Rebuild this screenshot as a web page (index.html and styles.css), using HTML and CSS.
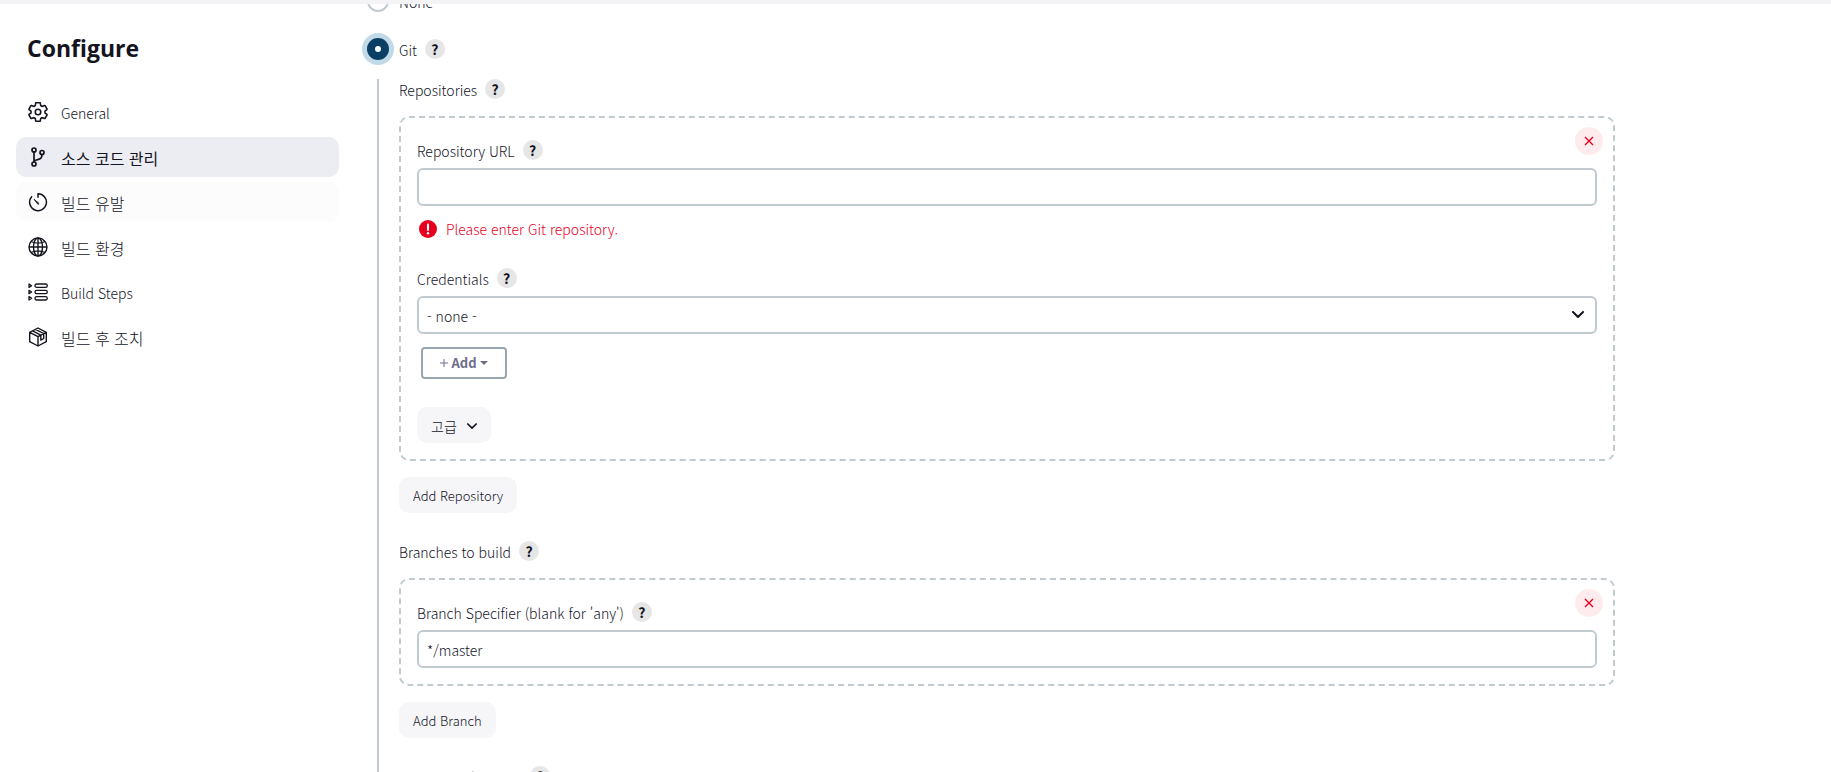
FILE: index.html
```html
<!DOCTYPE html>
<html lang="ko">
<head>
  <meta charset="utf-8">
  <meta name="viewport" content="width=device-width, initial-scale=1.0">
  <title>Configure</title>
  <link rel="stylesheet" href="styles.css">
</head>
<body>

  <header class="topbar"></header>

  <div class="page">
    <aside class="sidebar">
      <h1>Configure</h1>
      <nav class="tasks">
        <a class="task" href="#general">
          <svg viewBox="26 26 460 460" fill="none" stroke="currentColor" stroke-width="36" stroke-linejoin="round" stroke-linecap="round"><circle cx="256" cy="256" r="64"/><path d="M416.390 256a154.340 154.340 0 01-1.530 20.790l45.210 35.460a10.810 10.810 0 012.450 13.750l-42.770 74a10.810 10.810 0 01-13.140 4.590l-44.900-18.080a16.110 16.110 0 00-15.170 1.750A164.480 164.480 0 01325 400.800a15.940 15.940 0 00-8.820 12.140l-6.730 47.890a11.080 11.080 0 01-10.680 9.170h-85.540a11.110 11.110 0 01-10.690-8.870l-6.720-47.820a16.070 16.070 0 00-9-12.220 155.300 155.300 0 01-21.460-12.570 16 16 0 00-15.110-1.710l-44.890 18.070a10.810 10.810 0 01-13.140-4.580l-42.770-74a10.800 10.800 0 012.450-13.750l38.210-30a16.050 16.050 0 006-14.080c-.36-4.170-.58-8.330-.58-12.500s.21-8.270.58-12.350a16 16 0 00-6.070-13.940l-38.190-30A10.810 10.810 0 0149.480 186l42.770-74a10.810 10.810 0 0113.140-4.590l44.900 18.080a16.110 16.110 0 0015.170-1.750A164.480 164.480 0 01187 111.200a15.940 15.940 0 008.820-12.140l6.730-47.890A11.080 11.080 0 01213.230 42h85.540a11.110 11.110 0 0110.690 8.870l6.720 47.820a16.070 16.070 0 009 12.220 155.300 155.300 0 0121.460 12.570 16 16 0 0015.110 1.710l44.890-18.070a10.810 10.810 0 0113.140 4.580l42.770 74a10.800 10.800 0 01-2.450 13.750l-38.210 30a16.050 16.050 0 00-6.050 14.080c.33 4.140.55 8.300.55 12.470z"/></svg>
          <span>General</span>
        </a>
        <a class="task ko active" href="#scm">
          <svg viewBox="0 0 20 20" fill="none" stroke="currentColor" stroke-width="1.7" stroke-linecap="round"><circle cx="6" cy="3" r="2"/><circle cx="6" cy="17" r="2"/><circle cx="14" cy="5.500" r="2"/><path d="M6 5v10M14 7.500c0 4-2 4.500-4.500 5.200C7.500 13.200 6 13.500 6 15"/></svg>
          <span>소스 코드 관리</span>
        </a>
        <a class="task ko hover" href="#triggers">
          <svg viewBox="0 0 20 20" fill="none" stroke="currentColor" stroke-width="1.5" stroke-linecap="round" stroke-linejoin="round"><path d="M10 5.200V1.800a8.400 8.400 0 1 1-6.400 3"/><path d="M10.800 11.300L6 7.200l3.700 4.900z" fill="currentColor" stroke-width=".8"/></svg>
          <span>빌드 유발</span>
        </a>
        <a class="task ko" href="#environment">
          <svg viewBox="0 0 20 20" fill="none" stroke="currentColor" stroke-width="1.4"><circle cx="10" cy="10" r="9"/><ellipse cx="10" cy="10" rx="4.500" ry="9"/><path d="M10 1v18M1 10h18M3 4.500c4 2.200 10 2.200 14 0M3 15.500c4-2.200 10-2.200 14 0"/></svg>
          <span>빌드 환경</span>
        </a>
        <a class="task" href="#steps">
          <svg viewBox="0 0 20 20" fill="none" stroke="currentColor" stroke-width="1.3" stroke-linejoin="round"><rect x="7" y="2" width="12.300" height="3.400" rx="1.700"/><rect x="7" y="8.300" width="12.300" height="3.400" rx="1.700"/><rect x="7" y="14.600" width="12.300" height="3.400" rx="1.700"/><path d="M1 2l2.600 1.700L1 5.400zM1 8.300L3.600 10 1 11.700zM1 14.600l2.600 1.700L1 18z"/></svg>
          <span>Build Steps</span>
        </a>
        <a class="task ko" href="#post">
          <svg viewBox="0 0 20 20" fill="none" stroke="currentColor" stroke-width="1.4" stroke-linejoin="round"><path d="M10 1l8.300 4.300v9.400L10 19l-8.300-4.300V5.300zM1.700 5.300L10 9.600l8.300-4.300M10 9.600V19M4.600 3.900l8.200 4.200v5l2.900-1.600v-5L7.400 2.300"/></svg>
          <span>빌드 후 조치</span>
        </a>
      </nav>
    </aside>

    <main class="main">
      <div class="radio-row">
        <input type="radio" name="scm" id="scmNone">
        <label for="scmNone">None</label>
      </div>
      <div class="radio-row">
        <input type="radio" name="scm" id="scmGit" checked>
        <label for="scmGit">Git</label>
        <button type="button" class="help" aria-label="Help for Git">?</button>
      </div>

      <form class="nested">
        <div class="label-row">
          <span>Repositories</span>
          <button type="button" class="help" aria-label="Help for Repositories">?</button>
        </div>
        <section class="chunk">
          <button type="button" class="delete" aria-label="Delete repository">
            <svg viewBox="0 0 10 10" stroke="currentColor" stroke-width="1.4"><path d="M1 1l8 8M9 1L1 9"/></svg>
          </button>
          <div class="label-row">
            <label for="repoUrl">Repository URL</label>
            <button type="button" class="help" aria-label="Help for Repository URL">?</button>
          </div>
          <input type="text" class="field" id="repoUrl">
          <p class="error">
            <svg viewBox="0 0 18 18"><circle cx="9" cy="9" r="9" fill="currentColor"/><path d="M9 4.500v5.500" stroke="#fff" stroke-width="2" stroke-linecap="round"/><circle cx="9" cy="13.200" r="1.200" fill="#fff"/></svg>
            Please enter Git repository.
          </p>
          <div class="label-row">
            <label for="credentials">Credentials</label>
            <button type="button" class="help" aria-label="Help for Credentials">?</button>
          </div>
          <div class="select">
            <select class="field" id="credentials">
              <option>- none -</option>
            </select>
            <svg viewBox="0 0 12 8" fill="none" stroke="currentColor" stroke-width="2" stroke-linecap="round" stroke-linejoin="round"><path d="M1 1l5 5 5-5"/></svg>
          </div>
          <button type="button" class="add-credentials">
            <svg class="plus" viewBox="0 0 8 8" stroke="currentColor"><path d="M4 0v8M0 4h8"/></svg>
            Add
            <svg class="caret" viewBox="0 0 8 4" fill="currentColor"><path d="M0 0h8L4 4z"/></svg>
          </button>
          <button type="button" class="button advanced">
            고급
            <svg viewBox="0 0 12 8" fill="none" stroke="currentColor" stroke-width="2" stroke-linecap="round" stroke-linejoin="round"><path d="M1 1l5 5 5-5"/></svg>
          </button>
        </section>
        <button type="button" class="button">Add Repository</button>

        <div class="label-row next">
          <span>Branches to build</span>
          <button type="button" class="help" aria-label="Help for Branches to build">?</button>
        </div>
        <section class="chunk">
          <button type="button" class="delete" aria-label="Delete branch">
            <svg viewBox="0 0 10 10" stroke="currentColor" stroke-width="1.4"><path d="M1 1l8 8M9 1L1 9"/></svg>
          </button>
          <div class="label-row">
            <label for="branch">Branch Specifier (blank for 'any')</label>
            <button type="button" class="help" aria-label="Help for Branch Specifier">?</button>
          </div>
          <input type="text" class="field" id="branch" value="*/master">
        </section>
        <button type="button" class="button">Add Branch</button>

        <div class="label-row next">
          <span>Repository browser</span>
          <button type="button" class="help" aria-label="Help for Repository browser">?</button>
        </div>
      </form>
    </main>
  </div>

</body>
</html>
```
FILE: styles.css
```css
* {
  box-sizing: border-box;
}
body {
  display: flex;
  flex-direction: column;
  height: 100vh;
  margin: 0;
  overflow: hidden;
  background-color: #fff;
  color: #14141f;
  font-family: "Noto Sans CJK KR", sans-serif;
  font-size: 14px;
  font-weight: 300;
  line-height: 20px;
}
button, input, select {
  margin: 0;
  color: inherit;
  font: inherit;
}
svg {
  flex-shrink: 0;
}
.topbar {
  flex-shrink: 0;
  height: 4px;
  background-color: #f4f4f7;
}
.page {
  display: flex;
  flex: 1;
  gap: 28px;
  min-height: 0;
  overflow: hidden;
}

/* Sidebar */
.sidebar {
  flex: 0 0 339px;
  padding: 28px 0 0 16px;
}
h1 {
  margin: 0 0 28px;
  padding-left: 11px;
  font-family: "Open Sans", sans-serif;
  font-size: 23px;
  font-weight: 700;
  line-height: 32px;
}
.tasks {
  display: flex;
  flex-direction: column;
  gap: 5px;
}
.task {
  display: flex;
  align-items: center;
  gap: 13px;
  height: 40px;
  padding: 0 12px;
  border-radius: 10px;
  color: inherit;
  text-decoration: none;
}
.task.ko {
  font-size: 16px;
}
.task svg {
  width: 20px;
  height: 20px;
}
.task span, .label-row span, label {
  padding-top: 2px;
}
.task.active {
  background-color: #ecedf3;
  font-weight: 400;
}
.task.hover {
  background-color: #fcfcfd;
}

/* Source code management */
.main {
  flex: 1;
  max-width: 1248px;
  margin-top: -27px;
}
.radio-row {
  display: flex;
  align-items: center;
  height: 48px;
}
.radio-row input {
  appearance: none;
  width: 22px;
  height: 22px;
  margin-right: 10px;
  border: 2px solid #c0cacf;
  border-radius: 50%;
  background-color: #fff;
}
.radio-row input:checked {
  border: 8px solid #0b3f63;
  box-shadow: 0 0 0 5px #c2d9e8;
}
.help {
  width: 20px;
  height: 20px;
  margin-left: 8px;
  padding: 0;
  border: none;
  border-radius: 50%;
  background-color: #e6e6e6;
  font-weight: 700;
}
.nested {
  display: flex;
  flex-direction: column;
  align-items: flex-start;
  height: 1000px;
  margin: 6px 0 0 10px;
  padding-left: 20px;
  border-left: 2px solid #c0cacf;
}
.label-row {
  display: flex;
  align-items: center;
  height: 20px;
}
.label-row.next {
  margin-top: 28px;
}
.chunk {
  position: relative;
  display: flex;
  flex-direction: column;
  align-items: flex-start;
  width: 100%;
  margin: 17px 0 16px;
  padding: 22px 16px 16px;
  border: 2px dashed #c0cacf;
  border-radius: 10px;
}
.delete {
  position: absolute;
  top: 9px;
  right: 10px;
  display: flex;
  align-items: center;
  justify-content: center;
  width: 28px;
  height: 28px;
  padding: 0;
  border: none;
  border-radius: 50%;
  background-color: #fdebed;
  color: #e6001f;
}
.delete svg {
  width: 10px;
  height: 10px;
}
.field {
  width: 100%;
  height: 38px;
  margin-top: 8px;
  padding: 2px 8px 0;
  border: 2px solid #c0cacf;
  border-radius: 6px;
  background-color: #fff;
}
.select {
  position: relative;
  width: 100%;
}
.select .field {
  display: block;
  appearance: none;
}
.select svg {
  position: absolute;
  right: 12px;
  bottom: 15px;
  width: 14px;
  height: 8px;
}
.error {
  display: flex;
  align-items: center;
  gap: 9px;
  height: 20px;
  margin: 13px 0 29px;
  padding-left: 2px;
  color: #e6001f;
}
.error svg {
  width: 18px;
  height: 18px;
}
.add-credentials {
  display: flex;
  align-items: center;
  justify-content: center;
  gap: 3px;
  width: 86px;
  height: 32px;
  margin: 13px 0 28px 4px;
  padding: 0;
  border: 2px solid #98a6af;
  border-radius: 4px;
  background-color: #fff;
  color: #6f6f8d;
  font-size: 13px;
  font-weight: 700;
}
.plus {
  width: 8px;
  height: 8px;
}
.caret {
  width: 8px;
  height: 4px;
}
.button {
  display: flex;
  align-items: center;
  gap: 10px;
  height: 36px;
  padding: 2px 14px 0;
  border: none;
  border-radius: 10px;
  background-color: #f6f6f9;
  font-size: 13px;
}
.button.advanced {
  font-size: 14px;
}
.button svg {
  width: 10px;
  height: 7px;
}
```
